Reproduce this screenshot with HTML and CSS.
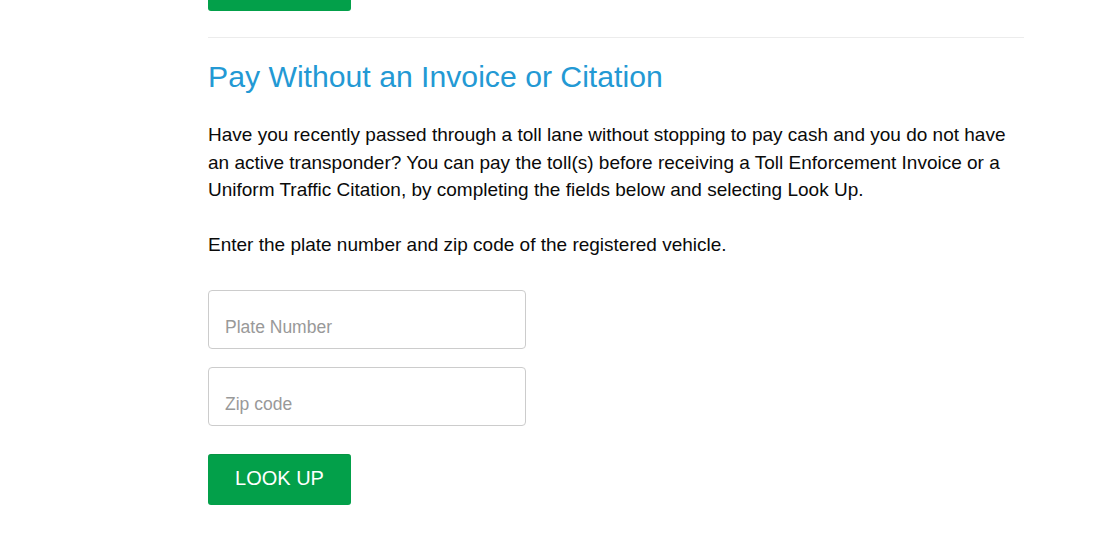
FILE: index.html
```html
<!DOCTYPE html>
<html lang="en">
<head>
<meta charset="utf-8">
<title>Pay Without an Invoice or Citation</title>
<link rel="stylesheet" href="styles.css">
</head>
<body>
<main class="content">
  <div class="btn btn-top" aria-hidden="true"></div>
  <hr class="divider">
  <h2 class="title">Pay Without an Invoice or Citation</h2>
  <p class="text">Have you recently passed through a toll lane without stopping to pay cash and you do not have an active transponder? You can pay the toll(s) before receiving a Toll Enforcement Invoice or a Uniform Traffic Citation, by completing the fields below and selecting Look Up.</p>
  <p class="text text-last">Enter the plate number and zip code of the registered vehicle.</p>
  <form class="form">
    <input class="field" type="text" placeholder="Plate Number">
    <input class="field" type="text" placeholder="Zip code">
    <button class="btn btn-look" type="button">LOOK UP</button>
  </form>
</main>
</body>
</html>
```
FILE: styles.css
```css
* { box-sizing: border-box; }
html, body { margin: 0; padding: 0; background: #fff; overflow: hidden; }
body {
  font-family: "Liberation Sans", Arial, Helvetica, sans-serif;
  color: #111;
}
.content {
  width: 816px;
  margin-left: 208px;
  display: flex;
  flex-direction: column;
  align-items: flex-start;
}
.btn {
  width: 143px;
  height: 51px;
  border: 0;
  border-top: 1px solid #079443;
  border-radius: 3px;
  background: #03a04a;
  color: #fff;
  font-family: "Liberation Sans", Arial, sans-serif;
  font-size: 20px;
  padding: 0 0 3px;
  cursor: pointer;
}
.btn-top { margin-top: -40px; }
.divider {
  align-self: stretch;
  border: 0;
  border-top: 1px solid #ececec;
  margin: 26px 0 0;
  height: 0;
}
.title {
  margin: 22px 0 0;
  font-weight: normal;
  font-size: 30.2px;
  line-height: 33px;
  color: #2399d4;
}
.text {
  margin: 28px 0 0;
  font-size: 19px;
  line-height: 27.5px;
  color: #0a0a0a;
}
.text-last { margin-top: 27.5px; }
.form {
  margin-top: 31.5px;
  display: flex;
  flex-direction: column;
  align-items: flex-start;
}
.field {
  width: 318px;
  height: 59px;
  border: 1px solid #cccccc;
  border-radius: 4px;
  padding: 24px 16px 8px;
  font-family: "Liberation Sans", Arial, sans-serif;
  font-size: 17.5px;
  line-height: 25px;
  color: #333;
  outline: none;
}
.field + .field { margin-top: 18px; }
.field::placeholder { color: #999; }
.btn-look { margin-top: 28px; }
```
